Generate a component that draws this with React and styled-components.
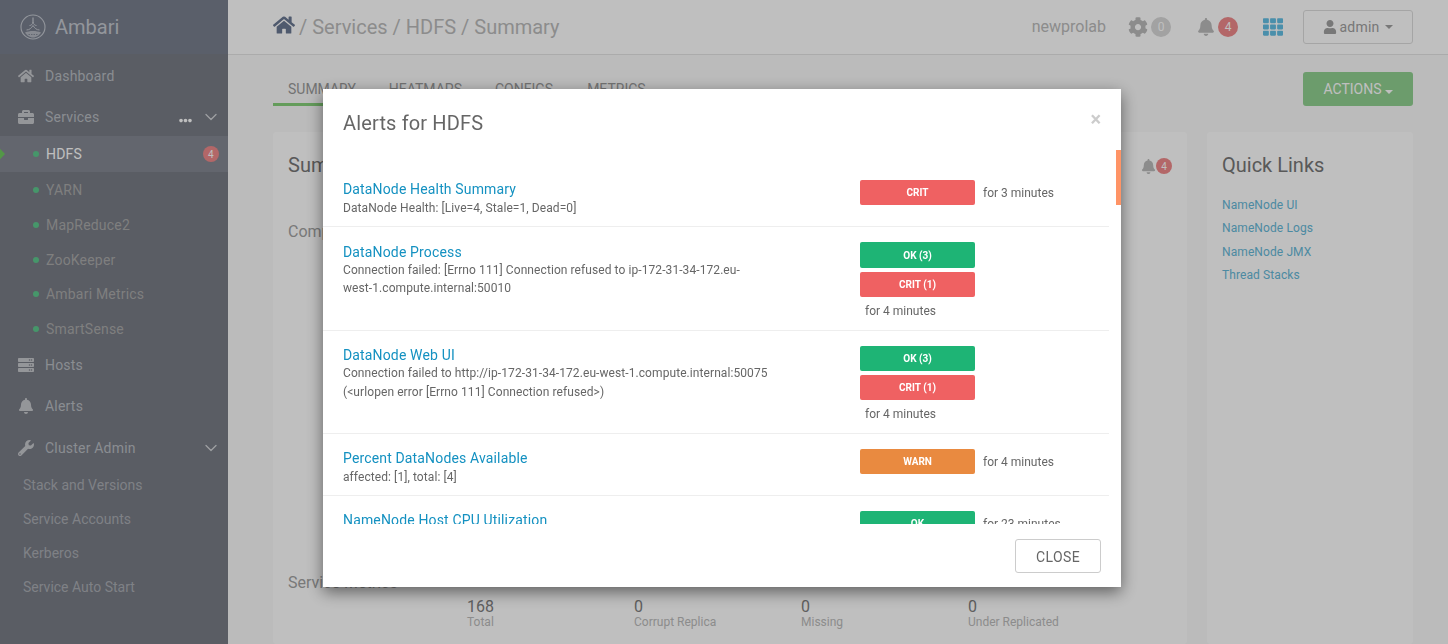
import React from "react";
import styled, { createGlobalStyle } from "styled-components";
import { FaHome, FaBriefcase, FaServer, FaBell, FaWrench, FaCog, FaUser, FaTh, FaEllipsisH } from "react-icons/fa";
import { ChevronDown } from "lucide-react";

const Global = createGlobalStyle`
  html, body { margin: 0; padding: 0; height: 100%; overflow: hidden; }
  body { font-family: Roboto, "Liberation Sans", sans-serif; color: #666; background: #fafafa; }
  * { box-sizing: border-box; }
`;

const Page = styled.div`display: flex; width: 1448px; height: 644px; overflow: hidden;`;
const Sidebar = styled.aside`width: 228px; flex: none; background: #787c86; color: #b8bcc2; display: flex; flex-direction: column;`;
const Brand = styled.div`height: 54px; background: #787f8e; display: flex; align-items: center; padding-left: 20px; gap: 9px; font-size: 20px; color: #c4c8d0;`;
const Nav = styled.nav`display: flex; flex-direction: column;`;
const NavItem = styled.div`
  height: ${p => p.$h}px; display: flex; align-items: center; padding-left: 18px; font-size: 14px; letter-spacing: .2px; position: relative;
  & > svg:first-child { width: 16px; height: 16px; margin-right: 11px; flex: none; color: #c6c8cc; }
`;
const Chevron = styled(ChevronDown)`position: absolute; right: 7px; top: 50%; transform: translateY(-50%); width: 20px; height: 20px; stroke-width: 1.6; color: #d2d4d8;`;
const Dots = styled(FaEllipsisH)`position: absolute; left: 179px; top: 50%; margin-top: -3px; width: 13px; height: 13px; color: #fff;`;
const SubItem = styled.div`
  height: ${p => p.$h}px; display: flex; align-items: center; padding-left: 33px; font-size: 14px; letter-spacing: .2px; position: relative;
  background: ${p => (p.$active ? "#858993" : "transparent")}; color: ${p => (p.$active ? "#fff" : "#aaa")};
`;
const Dot = styled.span`width: 6px; height: 6px; border-radius: 50%; background: #5ec98e; margin-right: 7px;`;
const Marker = styled.span`position: absolute; left: -6px; top: 11px; width: 11px; height: 14px; background: #6fca5f; clip-path: polygon(40% 0, 100% 50%, 40% 100%, 0 50%);`;
const SideBadge = styled.span`position: absolute; right: 9px; top: 10px; width: 16px; height: 16px; border-radius: 50%; background: #ef8a8b; color: #fff; font-size: 10px; display: flex; align-items: center; justify-content: center;`;
const AdminLinks = styled.div`display: flex; flex-direction: column; padding-top: 1px;`;
const AdminLink = styled.div`height: 34px; display: flex; align-items: center; padding-left: 23px; font-size: 14px; color: #aaadb3;`;

const Main = styled.main`flex: 1; min-width: 0; display: flex; flex-direction: column;`;
const TopBar = styled.header`height: 55px; flex: none; background: #fff; border-bottom: 1px solid #e5e5e5; display: flex; align-items: center; padding: 0 35px 1px 45px;`;
const Crumbs = styled.div`display: flex; align-items: center; font-size: 20px; color: #bbb; flex: 1; gap: 4px; svg { color: #6a7893; width: 22px; height: 22px; margin-top: -4px; }`;
const Cluster = styled.span`font-size: 16px; color: #bbb; margin-right: 22px;`;
const TopIcon = styled.div`display: flex; align-items: center; gap: 3px; margin-right: ${p => p.$mr}px; svg { width: ${p => p.$s || 18}px; height: ${p => p.$s || 18}px; color: #bbb; }`;
const Count = styled.span`
  width: 20px; height: 20px; border-radius: 50%; background: ${p => (p.$grey ? "#d8d8d8" : "#ef8a8b")}; color: #fff; font-size: 12px;
  display: flex; align-items: center; justify-content: center;
`;
const Grid = styled(FaTh)`width: 20px; height: 20px; color: #63bfe4; margin-right: 20px;`;
const UserBtn = styled.button`
  width: 110px; height: 34px; background: #fff; border: 1px solid #ddd; border-radius: 3px; font: 14px Roboto, sans-serif; color: #a0a0a0; letter-spacing: .2px;
  display: flex; align-items: center; justify-content: center; gap: 3px; padding: 0; svg { width: 14px; height: 14px; }
`;
const Caret = styled.span`display: inline-block; border-top: 4px solid currentColor; border-left: 4px solid transparent; border-right: 4px solid transparent; margin-left: 3px;`;

const Content = styled.div`flex: 1; padding: 17px 35px 0 45px; display: flex; flex-direction: column; min-height: 0;`;
const TabBar = styled.div`display: flex; align-items: flex-start; height: 60px; flex: none;`;
const Tab = styled.div`height: 34px; padding: 9px 15px 0; font-size: 14px; color: #999; border-bottom: 3px solid ${p => (p.$on ? "#86d07a" : "transparent")}; margin-right: ${p => p.$mr || 8}px;`;
const Actions = styled.button`margin-left: auto; width: 110px; height: 34px; background: #91d091; border: 0; border-radius: 3px; color: #fff; font: 14px Roboto, sans-serif;`;
const Cards = styled.div`flex: 1; display: flex; gap: 20px; min-height: 0;`;
const Card = styled.section`background: #fff; border-radius: 3px; padding: 20px 15px; position: relative; width: ${p => p.$w}px; flex: none; display: flex; flex-direction: column;`;
const CardTitle = styled.h2`margin: 0; font-size: 20px; line-height: 26px; font-weight: 400; color: #777;`;
const SubTitle = styled.div`font-size: 16px; color: #a2a2a2; margin-top: ${p => p.$mt}px;`;
const CardBell = styled.div`position: absolute; right: 15px; top: 26px; display: flex; align-items: center; svg { width: 15px; height: 15px; color: #bbb; } span { width: 16px; height: 16px; font-size: 10px; }`;
const QuickLink = styled.a`font-size: 12px; color: #66b8d8; line-height: 23.4px; letter-spacing: .1px;`;
const QuickLinks = styled.div`display: flex; flex-direction: column; margin-top: 16px;`;
const Metrics = styled.div`display: flex; margin-left: 179px; margin-top: 6px;`;
const Metric = styled.div`width: 167px; display: flex; flex-direction: column;`;
const MetricNum = styled.div`font-size: 16px; line-height: 17px; color: #808080;`;
const MetricLabel = styled.div`font-size: 12px; line-height: 14px; color: #bbb;`;

const Backdrop = styled.div`position: fixed; inset: 0; background: rgba(0,0,0,.25);`;
const Modal = styled.div`position: fixed; left: 323px; top: 89px; width: 798px; height: 498px; background: #fff; box-shadow: 0 5px 15px rgba(0,0,0,.5); display: flex; flex-direction: column;`;
const ModalHead = styled.div`height: 61px; flex: none; padding: 20px 20px 0; position: relative;`;
const ModalTitle = styled.h3`margin: 0; font-size: 20px; line-height: 28px; font-weight: 400; color: #666; letter-spacing: .15px;`;
const CloseX = styled.span`position: absolute; right: 20px; top: 18px; font-size: 20px; line-height: 24px; font-weight: 700; color: #ccc;`;
const ModalBody = styled.div`height: 374px; flex: none; overflow: hidden; position: relative;`;
const Thumb = styled.div`position: absolute; right: 0; top: 0; width: 5px; height: 55px; background: #ff9466;`;
const Row = styled.div`
  width: 786px; display: grid; grid-template-columns: 509px 115px auto; column-gap: 8px; align-items: start; padding: 0 0 0 20px;
  height: ${p => p.$h}px; padding-top: ${p => p.$pt}px; border-bottom: 1px solid #eee;
`;
const AlertInfo = styled.div`margin-top: ${p => p.$up ? -1 : 0}px;`;
const AlertName = styled.a`display: block; font-size: 14px; line-height: 20px; color: #1491c1; letter-spacing: .15px;`;
const AlertText = styled.div`font-size: 12px; line-height: ${p => p.$lh || 19}px; margin-top: ${p => p.$mt || 0}px; color: #666; letter-spacing: .08px;`;
const Statuses = styled.div`display: flex; flex-direction: column; gap: 4px;`;
const Status = styled.div`
  height: ${p => p.$h || 25}px; border-radius: 2px; color: #fff; font-size: 10px; font-weight: 700; display: flex; align-items: center; justify-content: center;
  background: ${p => ({ ok: "#1eb475", crit: "#ef6162", warn: "#e98a40" }[p.$kind])}; flex: none;
`;
const For = styled.div`font-size: 12px; line-height: 26px; color: #666;`;
const ForBelow = styled(For)`padding-left: 5px; line-height: 18px; margin-top: 1px;`;
const ModalFoot = styled.div`flex: 1; display: flex; justify-content: flex-end; align-items: flex-start; padding: 15px 20px 0;`;
const CloseBtn = styled.button`width: 86px; height: 34px; padding: 1px 0 0; background: #fff; border: 1px solid #ccc; border-radius: 3px; font: 14px Roboto, sans-serif; letter-spacing: .4px; color: #666;`;

const Logo = () => (
  <svg width="26" height="26" viewBox="0 0 26 26" fill="none" stroke="currentColor">
    <circle cx="13" cy="13" r="12" strokeWidth="1.1" />
    <path d="M13 3.500v5" strokeWidth="1.300" />
    <path d="M9.500 11.500c2 0 3-1.500 3.500-3.500.5 2 1.500 3.500 3.500 3.500" strokeWidth="1" />
    <path d="M6.500 16c3 0 5-2 6.500-4.500 1.500 2.500 3.500 4.500 6.500 4.500" strokeWidth="1" />
    <path d="M5 18.500c2.500-1 5-1.500 8-1.500s5.500.5 8 1.500c-1.500 2.500-4.500 5-8 5s-6.500-2.500-8-5Z" fill="currentColor" stroke="none" opacity=".8" />
    <path d="M8.500 20.500h9" stroke="#787f8e" strokeWidth=".8" strokeDasharray="1.500 1" />
  </svg>
);

export default function App() {
  return (
    <Page>
      <Global />
      <Sidebar>
        <Brand><Logo />Ambari</Brand>
        <Nav>
          <NavItem $h={44}><FaHome />Dashboard</NavItem>
          <NavItem $h={38}><FaBriefcase />Services<Dots /><Chevron /></NavItem>
          <SubItem $h={36} $active><Marker /><Dot />HDFS<SideBadge>4</SideBadge></SubItem>
          <SubItem $h={36}><Dot />YARN</SubItem>
          <SubItem $h={34}><Dot />MapReduce2</SubItem>
          <SubItem $h={35}><Dot />ZooKeeper</SubItem>
          <SubItem $h={34}><Dot />Ambari Metrics</SubItem>
          <SubItem $h={35}><Dot />SmartSense</SubItem>
          <NavItem $h={37}><FaServer />Hosts</NavItem>
          <NavItem $h={46}><FaBell />Alerts</NavItem>
          <NavItem $h={38}><FaWrench />Cluster Admin<Chevron /></NavItem>
          <AdminLinks>
            <AdminLink>Stack and Versions</AdminLink>
            <AdminLink>Service Accounts</AdminLink>
            <AdminLink>Kerberos</AdminLink>
            <AdminLink>Service Auto Start</AdminLink>
          </AdminLinks>
        </Nav>
      </Sidebar>
      <Main>
        <TopBar>
          <Crumbs><FaHome />/ Services / HDFS / Summary</Crumbs>
          <Cluster>newprolab</Cluster>
          <TopIcon $mr={26} $s={20}><FaCog /><Count $grey>0</Count></TopIcon>
          <TopIcon $mr={25} $s={18}><FaBell /><Count>4</Count></TopIcon>
          <Grid />
          <UserBtn><FaUser />admin<Caret /></UserBtn>
        </TopBar>
        <Content>
          <TabBar>
            <Tab $on $mr={3}>SUMMARY</Tab>
            <Tab $mr={3}>HEATMAPS</Tab>
            <Tab $mr={4}>CONFIGS</Tab>
            <Tab>METRICS</Tab>
            <Actions>ACTIONS<Caret /></Actions>
          </TabBar>
          <Cards>
            <Card $w={914}>
              <CardTitle>Summary</CardTitle>
              <CardBell><FaBell /><Count>4</Count></CardBell>
              <SubTitle $mt={44}>Components</SubTitle>
              <SubTitle $mt={332}>Service Metrics</SubTitle>
              <Metrics>
                {[["168", "Total"], ["0", "Corrupt Replica"], ["0", "Missing"], ["0", "Under Replicated"]].map(([n, l]) => (
                  <Metric key={l}><MetricNum>{n}</MetricNum><MetricLabel>{l}</MetricLabel></Metric>
                ))}
              </Metrics>
            </Card>
            <Card $w={206}>
              <CardTitle>Quick Links</CardTitle>
              <QuickLinks>
                <QuickLink>NameNode UI</QuickLink>
                <QuickLink>NameNode Logs</QuickLink>
                <QuickLink>NameNode JMX</QuickLink>
                <QuickLink>Thread Stacks</QuickLink>
              </QuickLinks>
            </Card>
          </Cards>
        </Content>
      </Main>
      <Backdrop />
      <Modal>
        <ModalHead>
          <ModalTitle>Alerts for HDFS</ModalTitle>
          <CloseX>×</CloseX>
        </ModalHead>
        <ModalBody>
          <Row $h={77} $pt={30}>
            <AlertInfo $up>
              <AlertName>DataNode Health Summary</AlertName>
              <AlertText>DataNode Health: [Live=4, Stale=1, Dead=0]</AlertText>
            </AlertInfo>
            <Statuses><Status $kind="crit">CRIT</Status></Statuses>
            <For>for 3 minutes</For>
          </Row>
          <Row $h={104} $pt={15}>
            <AlertInfo>
              <AlertName>DataNode Process</AlertName>
              <AlertText $lh={18} $mt={-1}>Connection failed: [Errno 111] Connection refused to ip-172-31-34-172.eu-<br />west-1.compute.internal:50010</AlertText>
            </AlertInfo>
            <Statuses>
              <Status $kind="ok" $h={26}>OK (3)</Status>
              <Status $kind="crit">CRIT (1)</Status>
              <ForBelow>for 4 minutes</ForBelow>
            </Statuses>
          </Row>
          <Row $h={103} $pt={15}>
            <AlertInfo $up>
              <AlertName>DataNode Web UI</AlertName>
              <AlertText $mt={-1}>Connection failed to http://ip-172-31-34-172.eu-west-1.compute.internal:50075<br />(&lt;urlopen error [Errno 111] Connection refused&gt;)</AlertText>
            </AlertInfo>
            <Statuses>
              <Status $kind="ok">OK (3)</Status>
              <Status $kind="crit">CRIT (1)</Status>
              <ForBelow>for 4 minutes</ForBelow>
            </Statuses>
          </Row>
          <Row $h={62} $pt={15}>
            <AlertInfo $up>
              <AlertName>Percent DataNodes Available</AlertName>
              <AlertText>affected: [1], total: [4]</AlertText>
            </AlertInfo>
            <Statuses><Status $kind="warn">WARN</Status></Statuses>
            <For>for 4 minutes</For>
          </Row>
          <Row $h={62} $pt={15}>
            <AlertInfo $up>
              <AlertName>NameNode Host CPU Utilization</AlertName>
              <AlertText>CPU load</AlertText>
            </AlertInfo>
            <Statuses><Status $kind="ok">OK</Status></Statuses>
            <For>for 23 minutes</For>
          </Row>
          <Thumb />
        </ModalBody>
        <ModalFoot><CloseBtn>CLOSE</CloseBtn></ModalFoot>
      </Modal>
    </Page>
  );
}
